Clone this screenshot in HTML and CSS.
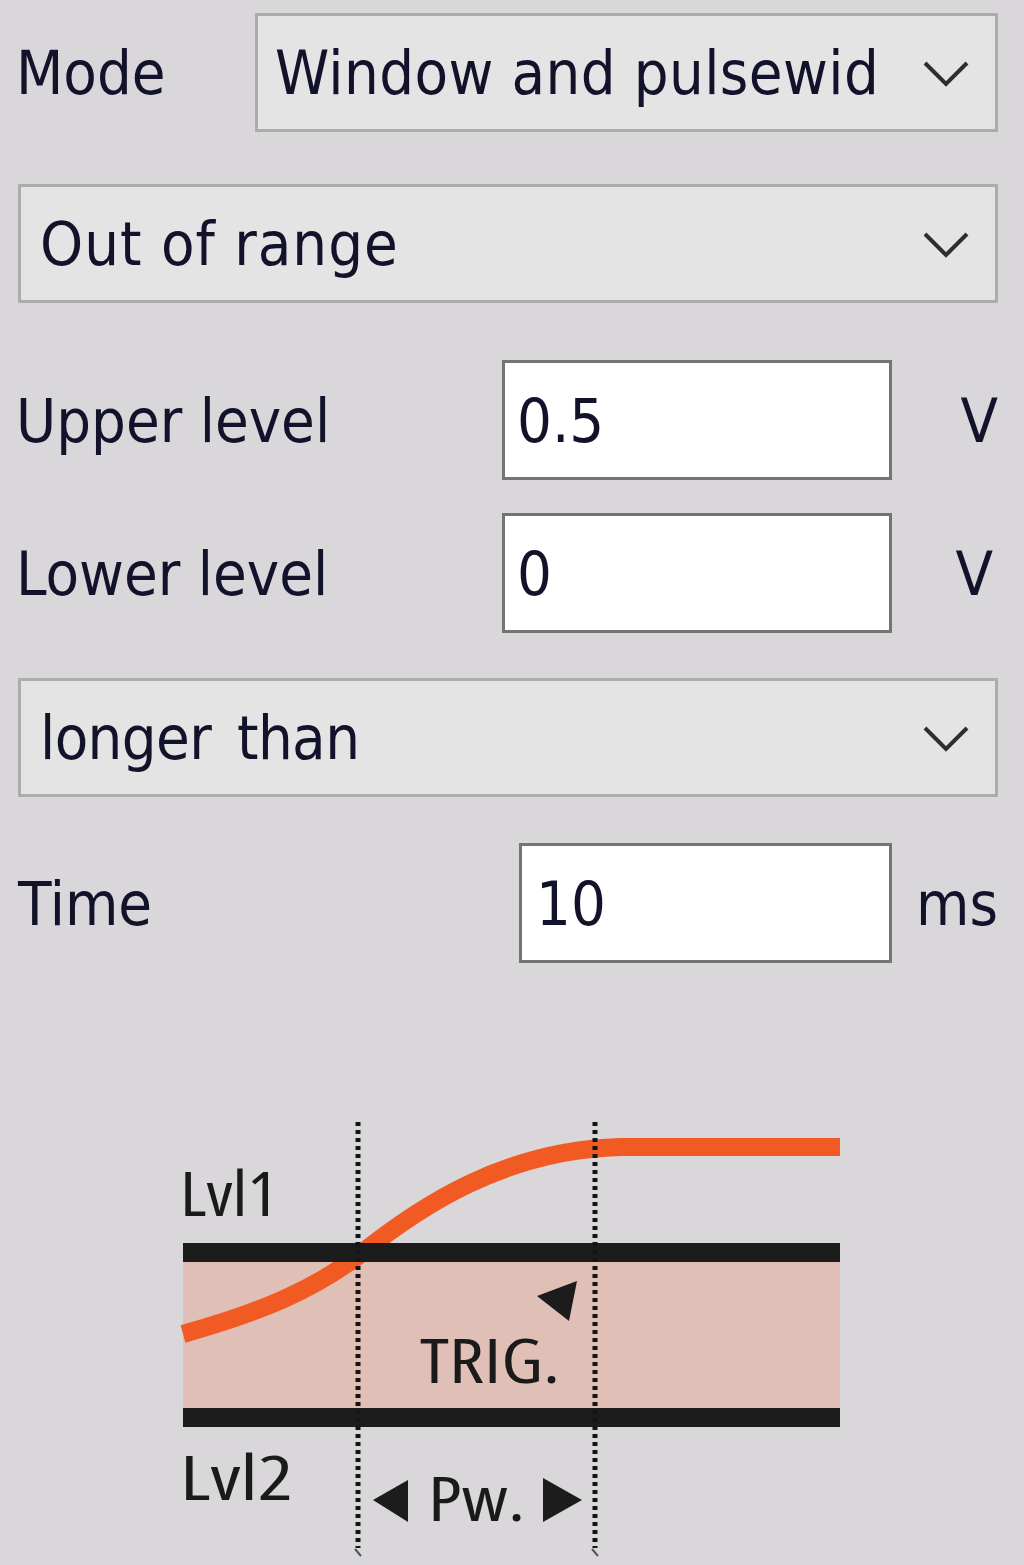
FILE: index.html
```html
<!DOCTYPE html>
<html lang="en">
<head>
<meta charset="utf-8">
<title>Trigger settings</title>
<link rel="stylesheet" href="styles.css">
</head>
<body>
<div class="panel">
  <div class="row row-mode">
    <span class="label label-mode">Mode</span>
    <div class="select select-mode">
      <span class="select-text">Window and pulsewid</span>
      <svg class="chev" viewBox="0 0 48 28" aria-hidden="true"><polyline points="3,3 24,24 45,3"/></svg>
    </div>
  </div>

  <div class="select select-full select-range">
    <span class="select-text">Out of range</span>
    <svg class="chev" viewBox="0 0 48 28" aria-hidden="true"><polyline points="3,3 24,24 45,3"/></svg>
  </div>

  <div class="row row-upper">
    <span class="label label-level">Upper level</span>
    <div class="input input-level">0.5</div>
    <span class="unit">V</span>
  </div>

  <div class="row row-lower">
    <span class="label label-level">Lower level</span>
    <div class="input input-level">0</div>
    <span class="unit unit-lower">V</span>
  </div>

  <div class="select select-full select-longer">
    <span class="select-text">longer than</span>
    <svg class="chev" viewBox="0 0 48 28" aria-hidden="true"><polyline points="3,3 24,24 45,3"/></svg>
  </div>

  <div class="row row-time">
    <span class="label label-time">Time</span>
    <div class="input input-time">10</div>
    <span class="unit">ms</span>
  </div>
</div>

<svg class="diagram" viewBox="0 1100 1024 465" aria-label="Window and pulse width trigger diagram">
  <rect x="183" y="1252" width="657" height="166" fill="#dfbfb6"/>
  <path d="M183,1334 C262,1312 312,1290 358,1256 C420,1206 505,1150 620,1147 L840,1147" fill="none" stroke="#f25a24" stroke-width="18"/>
  <rect x="183" y="1243" width="657" height="19" fill="#1c1c1c"/>
  <rect x="183" y="1408" width="657" height="19" fill="#1c1c1c"/>
  <line x1="358" y1="1122" x2="358" y2="1548" stroke="#151515" stroke-width="5" stroke-dasharray="4 4"/>
  <line x1="595" y1="1122" x2="595" y2="1548" stroke="#151515" stroke-width="5" stroke-dasharray="4 4"/>
  <path d="M355,1549 L361,1556 M592,1549 L598,1556" stroke="#555" stroke-width="2"/>
  <polygon points="537,1296 577,1281 569,1321" fill="#1c1c1c"/>
  <polygon points="373,1500 408,1480 408,1522" fill="#1c1c1c"/>
  <polygon points="543,1478 543,1522 582,1500" fill="#1c1c1c"/>
  <text class="dtext" x="180" y="1216" textLength="98" lengthAdjust="spacingAndGlyphs">Lvl1</text>
  <text class="dtext" x="180" y="1500" textLength="113" lengthAdjust="spacingAndGlyphs">Lvl2</text>
  <text class="dtext" x="420" y="1383" textLength="140" lengthAdjust="spacingAndGlyphs">TRIG.</text>
  <text class="dtext" x="428" y="1521" textLength="97" lengthAdjust="spacingAndGlyphs">Pw.</text>
</svg>
</body>
</html>
```

FILE: styles.css
```css
html, body {
  margin: 0;
  padding: 0;
  background: #d9d7da;
}

body {
  width: 1024px;
  height: 1565px;
  overflow: hidden;
  font-family: "DejaVu Sans Condensed", "DejaVu Sans", sans-serif;
  font-stretch: condensed;
  font-size: 61px;
  color: #12122a;
}

.panel {
  display: flex;
  flex-direction: column;
  padding: 13px 26px 0 16px;
}

.row {
  display: flex;
  align-items: center;
}

.label {
  flex: 0 0 auto;
  line-height: 1;
  white-space: nowrap;
}

.label-mode { width: 239px; }
.label-level { width: 486px; }
.label-time { width: 501px; padding-left: 2px; }

.select {
  box-sizing: border-box;
  height: 119px;
  display: flex;
  align-items: center;
  justify-content: space-between;
  background: #e4e4e4;
  border: 3px solid #acacac;
  padding: 0 25px 0 17px;
}

.select-mode { flex: 1 1 auto; }

.select-mode .select-text { letter-spacing: 0.4px; }

.select-full { margin-left: 2px; }

.select-text {
  line-height: 1;
  white-space: nowrap;
}

.select-range .select-text { padding-left: 2px; letter-spacing: 1px; }
.select-longer .select-text { padding-left: 2px; word-spacing: 9px; letter-spacing: -0.6px; }

.chev {
  width: 48px;
  height: 28px;
  flex: 0 0 auto;
  margin-top: 2px;
}

.chev polyline {
  fill: none;
  stroke: #2e2e2e;
  stroke-width: 4;
}

.select-range { margin-top: 52px; }
.row-upper { margin-top: 57px; }
.row-lower { margin-top: 33px; }
.select-longer { margin-top: 45px; }
.row-time { margin-top: 46px; }

.input {
  box-sizing: border-box;
  height: 120px;
  background: #ffffff;
  border: 3px solid #747474;
  display: flex;
  align-items: center;
  padding-left: 12px;
  line-height: 1;
}

.input-level { width: 390px; }
.input-time { width: 373px; padding-left: 14px; }

.unit {
  flex: 1 1 auto;
  text-align: right;
  line-height: 1;
}

.unit-lower { padding-right: 5px; }

.diagram {
  display: block;
  width: 1024px;
  height: 465px;
  margin-top: 137px;
}

.dtext {
  font-family: "Open Sans", "Noto Sans", sans-serif;
  font-size: 62px;
  fill: #1a1a1a;
}
```
